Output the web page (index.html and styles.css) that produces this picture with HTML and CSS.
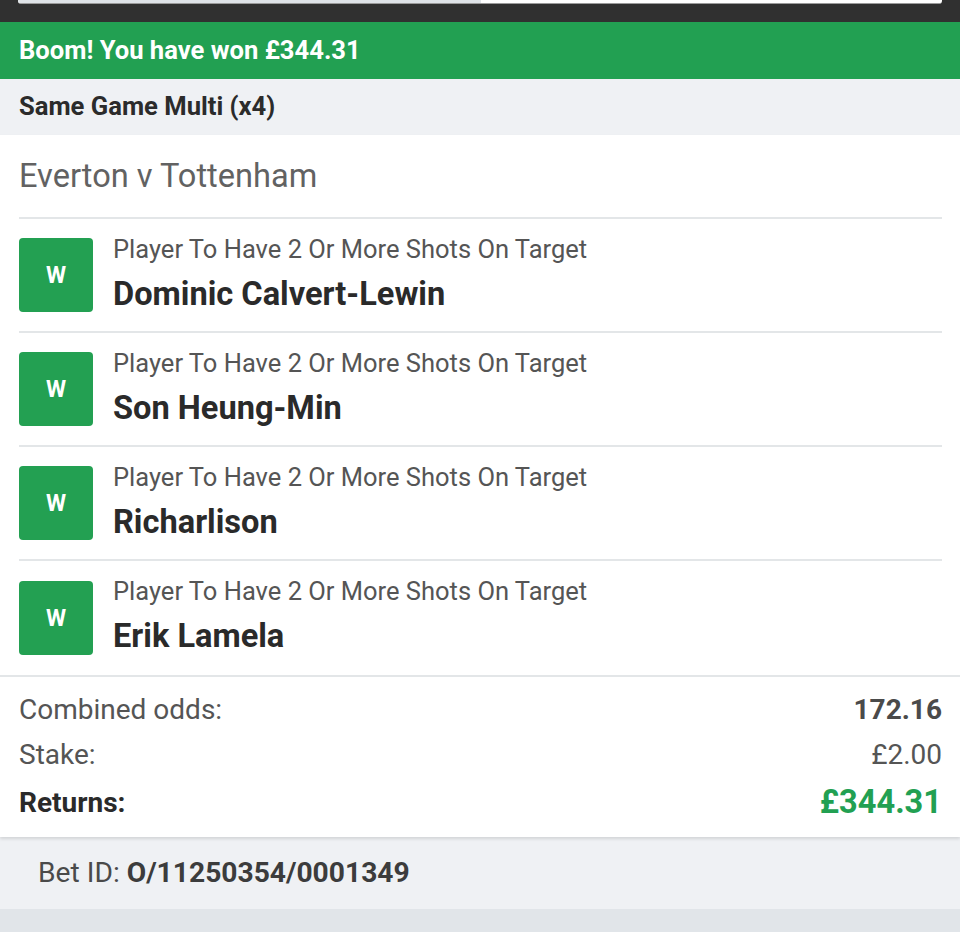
FILE: index.html
```html
<!DOCTYPE html>
<html>
<head>
<meta charset="utf-8">
<link rel="stylesheet" href="styles.css">
</head>
<body>
<div class="topbar">
  <div class="progress"><div class="progress-fill"></div></div>
</div>
<div class="banner">Boom! You have won £344.31</div>
<div class="subhead">Same Game Multi (x4)</div>
<div class="card">
  <div class="match">Everton v Tottenham</div>
  <div class="legs">
    <div class="leg">
      <div class="badge">W</div>
      <div class="leg-text">
        <div class="market">Player To Have 2 Or More Shots On Target</div>
        <div class="selection">Dominic Calvert-Lewin</div>
      </div>
    </div>
    <div class="leg">
      <div class="badge">W</div>
      <div class="leg-text">
        <div class="market">Player To Have 2 Or More Shots On Target</div>
        <div class="selection">Son Heung-Min</div>
      </div>
    </div>
    <div class="leg">
      <div class="badge">W</div>
      <div class="leg-text">
        <div class="market">Player To Have 2 Or More Shots On Target</div>
        <div class="selection">Richarlison</div>
      </div>
    </div>
    <div class="leg last">
      <div class="badge">W</div>
      <div class="leg-text">
        <div class="market">Player To Have 2 Or More Shots On Target</div>
        <div class="selection">Erik Lamela</div>
      </div>
    </div>
  </div>
  <div class="summary">
    <div class="sum-row"><span>Combined odds:</span><span class="odds">172.16</span></div>
    <div class="sum-row"><span>Stake:</span><span>£2.00</span></div>
    <div class="sum-row returns"><span>Returns:</span><span class="ret-val">£344.31</span></div>
  </div>
</div>
<div class="betid">Bet ID: <b>O/11250354/0001349</b></div>
<div class="footer"></div>
</body>
</html>
```
FILE: styles.css
```css
* { box-sizing: border-box; }
html, body { margin: 0; padding: 0; }
body {
  width: 960px;
  height: 932px;
  overflow: hidden;
  background: #e1e5e9;
  font-family: Roboto, "Liberation Sans", Arial, sans-serif;
  color: #333;
}
.topbar {
  height: 22px;
  background: #303030;
  padding: 0 18px;
}
.progress {
  height: 4px;
  background: #fff;
  border-bottom: 1px solid #9a9a9a;
  border-radius: 0 0 3px 3px;
  overflow: hidden;
}
.progress-fill {
  width: 463px;
  height: 100%;
  background: #dfe3e7;
}
.banner {
  height: 57px;
  background: #22a052;
  color: #fff;
  font-weight: 700;
  font-size: 25.6px;
  line-height: 56px;
  padding-left: 19px;
}
.subhead {
  height: 56px;
  background: #eff1f4;
  color: #2b2b2b;
  font-weight: 700;
  font-size: 25.6px;
  line-height: 54px;
  padding-left: 19px;
}
.card {
  background: #fff;
  box-shadow: 0 2px 3px rgba(0,0,0,0.12);
  position: relative;
}
.match {
  height: 84px;
  margin: 0 18px 0 19px;
  border-bottom: 2px solid #e3e6e8;
  font-size: 32.6px;
  line-height: 82px;
  color: #626262;
}
.legs {
  border-bottom: 2px solid #e3e6e8;
}
.leg {
  display: flex;
  align-items: center;
  gap: 20px;
  height: 114px;
  margin: 0 18px 0 19px;
  border-bottom: 2px solid #e3e6e8;
}
.leg.last {
  border-bottom: none;
  height: 114px;
}
.badge {
  width: 74px;
  height: 74px;
  flex: none;
  background: #23a052;
  border-radius: 4px;
  color: #fff;
  font-weight: 700;
  font-size: 23px;
  display: flex;
  align-items: center;
  justify-content: center;
}
.leg-text {
  align-self: flex-start;
  display: flex;
  flex-direction: column;
  padding-top: 15px;
}
.market {
  font-size: 25.5px;
  line-height: 30px;
  color: #555;
}
.selection {
  font-size: 32.6px;
  font-weight: 700;
  line-height: 40px;
  color: #2a2a2a;
  margin-top: 10px;
}
.summary {
  padding: 10px 18px 10px 19px;
}
.sum-row {
  display: flex;
  justify-content: space-between;
  align-items: center;
  height: 45px;
  font-size: 28px;
  color: #555;
}
.sum-row .odds {
  font-weight: 700;
  color: #4a4a4a;
}
.sum-row.returns {
  height: 50px;
  color: #2a2a2a;
  font-weight: 700;
}
.ret-val {
  font-size: 32.6px;
  color: #22a052;
}
.betid {
  height: 72px;
  background: #eff1f4;
  padding-left: 38px;
  font-size: 28.2px;
  line-height: 72px;
  color: #4a4a4a;
}
.betid b {
  font-weight: 700;
  color: #3c3c3c;
}
.footer {
  height: 24px;
  background: #e1e5e9;
}
```
